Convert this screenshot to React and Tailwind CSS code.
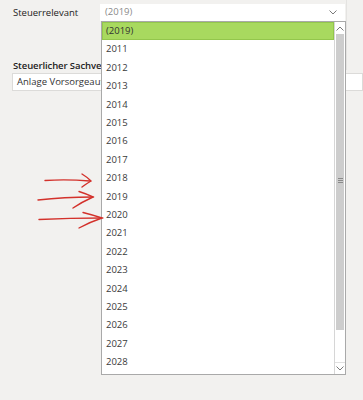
import React from 'react';

const years = ['(2019)', '2011', '2012', '2013', '2014', '2015', '2016', '2017', '2018', '2019', '2020', '2021', '2022', '2023', '2024', '2025', '2026', '2027', '2028'];

function Chevron({ className }) {
    return (
        <svg className={className} width="8" height="5" viewBox="0 0 8 5" fill="none">
            <path d="M0.5 0.5 L4 4 L7.5 0.5" stroke="#7a7a7a" strokeWidth="1" />
        </svg>
    );
}

function Arrows() {
    return (
        <svg className="absolute left-0 top-0" width="110" height="240" viewBox="0 0 110 240" fill="none" stroke="#d3312b" strokeWidth="1.4" strokeLinecap="round">
            <path d="M45 180.5 Q66 179 90 181" />
            <path d="M82 174 Q87 177 91 181 Q86 184 82 187" />
            <path d="M38 200 Q64 197 93 197" />
            <path d="M79 191.5 Q87 194 93 197 Q82 202 73 208" />
            <path d="M39 219.5 Q70 218 102 218" />
            <path d="M83 212.5 Q93 215 102 218 Q90 222 79 228" />
        </svg>
    );
}

export default function App() {
    return (
        <div className="relative w-[363px] h-[400px] bg-[#f2f1ef] overflow-hidden text-[#333] [font-family:'Open_Sans','Noto_Sans',sans-serif]">
            <div className="absolute left-[346px] top-0 h-[70px] w-px bg-[#e4e3e1]" />
            <div className="flex flex-col pt-[4px]">
                <div className="flex items-start">
                    <div className="w-[100px] pl-[13px] pt-[2px] text-[9.5px] leading-[13px] text-[#222]">Steuerrelevant</div>
                    <div className="w-[245px] h-[17px] bg-white flex items-center justify-between pl-[5px] pr-[8px]">
                        <span className="text-[9.5px] text-[#8a8a8a]">(2019)</span>
                        <Chevron />
                    </div>
                </div>
                <div className="mt-[38px] ml-[13px] text-[9.5px] leading-[13px] tracking-[-0.1px] font-semibold text-[#222] whitespace-nowrap">Steuerlicher Sachver</div>
                <div className="ml-[12px] mt-[1px] h-[18px] bg-white border border-[#dcdbd9] flex items-center pl-[4px]">
                    <span className="text-[9.5px] text-[#333] whitespace-nowrap">Anlage Vorsorgeauf</span>
                </div>
            </div>

            <div className="absolute left-[101px] top-[21px] w-[245px] h-[354px] bg-white border border-[#a9a9a9] flex">
                <div className="flex-1 flex flex-col">
                    {years.map((y, i) => (
                        <div
                            key={y}
                            className={
                                i === 0
                                    ? 'h-[18.4px] shrink-0 flex items-center pl-[3px] text-[9.5px] bg-[#a8d95f] border border-[#93c64c] text-[#333]'
                                    : 'h-[18.4px] shrink-0 flex items-center pl-[4px] text-[9.5px] text-[#3a3a3a]'
                            }
                        >
                            {y}
                        </div>
                    ))}
                </div>
                <div className="w-[11px] flex flex-col border-l border-[#d6d6d6] bg-white">
                    <div className="h-[12px] flex items-center justify-center">
                        <Chevron className="rotate-180" />
                    </div>
                    <div className="h-[296px] mx-[1px] bg-[#cdcdcd] flex items-center justify-center">
                        <div className="flex flex-col gap-[1px] -mt-[4px]">
                            <div className="w-[5px] h-px bg-[#8a8a8a]" />
                            <div className="w-[5px] h-px bg-[#8a8a8a]" />
                            <div className="w-[5px] h-px bg-[#8a8a8a]" />
                        </div>
                    </div>
                    <div className="flex-1" />
                    <div className="h-[12px] flex items-center justify-center border-t border-[#e0e0e0]">
                        <Chevron />
                    </div>
                </div>
            </div>

            <Arrows />
        </div>
    );
}
